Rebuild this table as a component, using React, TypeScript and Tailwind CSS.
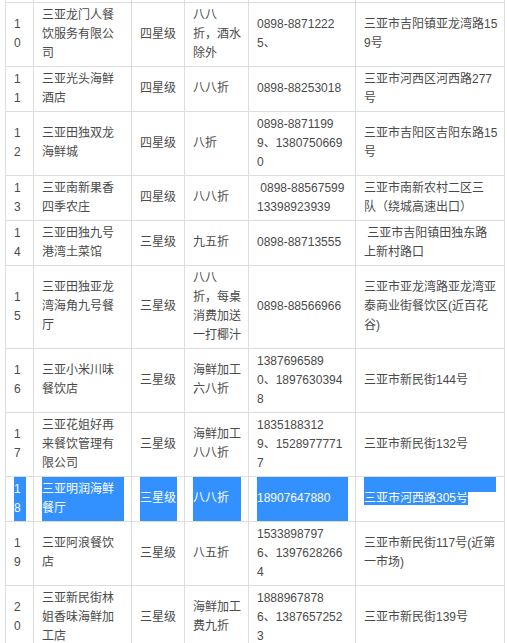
type Row = {
  no: string;
  name: string;
  level: string;
  discount: string;
  phone: string;
  address: string;
  selected?: boolean;
};

const rows: Row[] = [
  {
    no: "1\n0",
    name: "三亚龙门人餐\n饮服务有限公\n司",
    level: "四星级",
    discount: "八八\n折，酒水\n除外",
    phone: "0898-8871222\n5、",
    address: "三亚市吉阳镇亚龙湾路15\n9号",
  },
  {
    no: "1\n1",
    name: "三亚光头海鲜\n酒店",
    level: "四星级",
    discount: "八八折",
    phone: "0898-88253018",
    address: "三亚市河西区河西路277\n号",
  },
  {
    no: "1\n2",
    name: "三亚田独双龙\n海鲜城",
    level: "四星级",
    discount: "八折",
    phone: "0898-8871199\n9、1380750669\n0",
    address: "三亚市吉阳区吉阳东路15\n号",
  },
  {
    no: "1\n3",
    name: "三亚南新果香\n四季农庄",
    level: "四星级",
    discount: "八八折",
    phone: " 0898-88567599\n13398923939",
    address: "三亚市南新农村二区三\n队（绕城高速出口）",
  },
  {
    no: "1\n4",
    name: "三亚田独九号\n港湾土菜馆",
    level: "三星级",
    discount: "九五折",
    phone: "0898-88713555",
    address: " 三亚市吉阳镇田独东路\n上新村路口",
  },
  {
    no: "1\n5",
    name: "三亚田独亚龙\n湾海角九号餐\n厅",
    level: "三星级",
    discount: "八八\n折，每桌\n消费加送\n一打椰汁",
    phone: "0898-88566966",
    address: "三亚市亚龙湾路亚龙湾亚\n泰商业街餐饮区(近百花\n谷)",
  },
  {
    no: "1\n6",
    name: "三亚小米川味\n餐饮店",
    level: "三星级",
    discount: "海鲜加工\n六八折",
    phone: "1387696589\n0、1897630394\n8",
    address: "三亚市新民街144号",
  },
  {
    no: "1\n7",
    name: "三亚花姐好再\n来餐饮管理有\n限公司",
    level: "三星级",
    discount: "海鲜加工\n八八折",
    phone: "1835188312\n9、1528977771\n7",
    address: "三亚市新民街132号",
  },
  {
    no: "1\n8",
    name: "三亚明润海鲜\n餐厅",
    level: "三星级",
    discount: "八八折",
    phone: "18907647880",
    address: "三亚市河西路305号",
    selected: true,
  },
  {
    no: "1\n9",
    name: "三亚阿浪餐饮\n店",
    level: "三星级",
    discount: "八五折",
    phone: "1533898797\n6、1397628266\n4",
    address: "三亚市新民街117号(近第\n一市场)",
  },
  {
    no: "2\n0",
    name: "三亚新民街林\n姐香味海鲜加\n工店",
    level: "三星级",
    discount: "海鲜加工\n费九折",
    phone: "1888967878\n6、1387657252\n3",
    address: "三亚市新民街139号",
  },
];

const cell = "border border-[#dddddd] px-2 py-[3px] align-middle whitespace-pre";
const picked =
  "border border-[#dddddd] px-2 py-0 align-middle whitespace-pre bg-[#3390ff] bg-clip-content text-white";

export default function App() {
  return (
    <div className="h-[643px] w-[507px] overflow-hidden bg-white">
      <table
        className="ml-[5px] w-[499px] table-fixed border-collapse text-[12px] leading-[19px] text-[#4a4a4a]"
        style={{ fontFamily: '"Liberation Sans", "Noto Sans CJK SC", sans-serif' }}
      >
        <colgroup>
          <col className="w-[28px]" />
          <col className="w-[98px]" />
          <col className="w-[53px]" />
          <col className="w-[64px]" />
          <col className="w-[107px]" />
          <col className="w-[149px]" />
        </colgroup>
        <tbody>
          <tr className="h-[2px]">
            {[0, 1, 2, 3, 4, 5].map((i) => (
              <td key={i} className="border-x border-[#dddddd] p-0" />
            ))}
          </tr>
          {rows.map((r) =>
            r.selected ? (
              <tr key={r.no} className="h-[45px]">
                <td className={picked}>{r.no}</td>
                <td className={picked}>{r.name}</td>
                <td className={picked}>{r.level}</td>
                <td className={picked}>{r.discount}</td>
                <td className={picked}>{r.phone}</td>
                <td className="relative border border-[#dddddd] px-2 py-0 align-middle whitespace-pre">
                  <div className="absolute left-2 right-2 top-0 h-[15px] bg-[#3390ff]" />
                  <span className="bg-[#3390ff] text-white">{r.address}</span>
                </td>
              </tr>
            ) : (
              <tr key={r.no}>
                <td className={cell}>{r.no}</td>
                <td className={cell}>{r.name}</td>
                <td className={cell}>{r.level}</td>
                <td className={cell}>{r.discount}</td>
                <td className={cell}>{r.phone}</td>
                <td className={cell}>{r.address}</td>
              </tr>
            )
          )}
        </tbody>
      </table>
    </div>
  );
}
